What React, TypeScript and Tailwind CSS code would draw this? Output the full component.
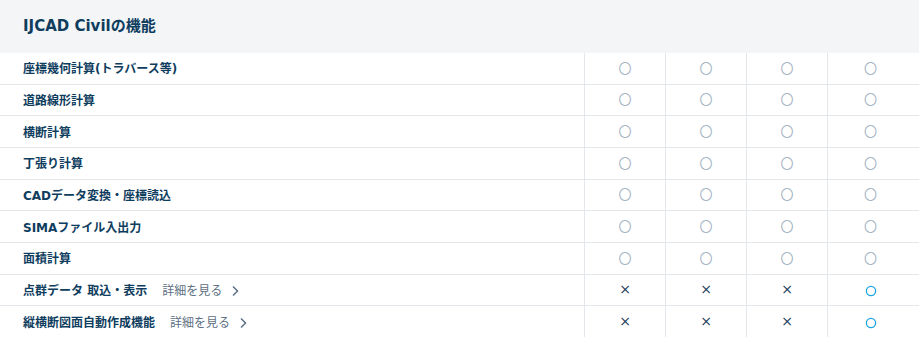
const font = { fontFamily: '"DejaVu Sans", "Noto Sans CJK JP", sans-serif' };

type Mark = "std" | "no" | "yes";

const rows: { label: string; link?: string; marks: Mark[] }[] = [
  { label: "座標幾何計算(トラバース等)", marks: ["std", "std", "std", "std"] },
  { label: "道路線形計算", marks: ["std", "std", "std", "std"] },
  { label: "横断計算", marks: ["std", "std", "std", "std"] },
  { label: "丁張り計算", marks: ["std", "std", "std", "std"] },
  { label: "CADデータ変換・座標読込", marks: ["std", "std", "std", "std"] },
  { label: "SIMAファイル入出力", marks: ["std", "std", "std", "std"] },
  { label: "面積計算", marks: ["std", "std", "std", "std"] },
  { label: "点群データ 取込・表示", link: "詳細を見る", marks: ["no", "no", "no", "yes"] },
  { label: "縦横断図面自動作成機能", link: "詳細を見る", marks: ["no", "no", "no", "yes"] },
];

const Chevron = () => (
  <svg width="8" height="12" viewBox="0 0 8 12" className="ml-[9px]">
    <path d="M2 1.5 L6.5 6 L2 10.5" fill="none" stroke="#5d7083" strokeWidth="1.5" />
  </svg>
);

const Cell = ({ mark, wide }: { mark: Mark; wide?: boolean }) => (
  <div className={`flex items-center justify-center border-l border-[#e3e7eb] ${wide ? "w-[86px]" : "w-[81px]"}`}>
    {mark === "std" && <span className="text-[13px] text-[#a3b2c2]">〇</span>}
    {mark === "no" && <span className="text-[14px] text-[#1d3f5c]">×</span>}
    {mark === "yes" && (
      <svg width="12" height="12" viewBox="0 0 12 12" className="mt-[2px]">
        <circle cx="6" cy="6" r="4.6" fill="none" stroke="#1ba3e4" strokeWidth="1.3" />
      </svg>
    )}
  </div>
);

export default function App() {
  return (
    <div className="w-[919px] h-[337px] overflow-hidden bg-white" style={font}>
      <div className="h-[53px] bg-[#f3f5f7] flex items-center px-[23px]">
        <h2 className="text-[15px] font-bold text-[#0f3d5e]">IJCAD Civilの機能</h2>
      </div>
      {rows.map((r) => (
        <div key={r.label} className="flex h-[31.67px] border-b border-[#e3e7eb]">
          <div className="w-[584px] flex items-center pl-[23px] pt-[2px] text-[12px] font-bold text-[#0f3d5e]">
            <span>{r.label}</span>
            {r.link && (
              <span className="flex items-center ml-[15px] font-normal text-[#5d7083]">
                {r.link}
                <Chevron />
              </span>
            )}
          </div>
          {r.marks.map((m, i) => (
            <Cell key={i} mark={m} wide={i === 3} />
          ))}
        </div>
      ))}
    </div>
  );
}
